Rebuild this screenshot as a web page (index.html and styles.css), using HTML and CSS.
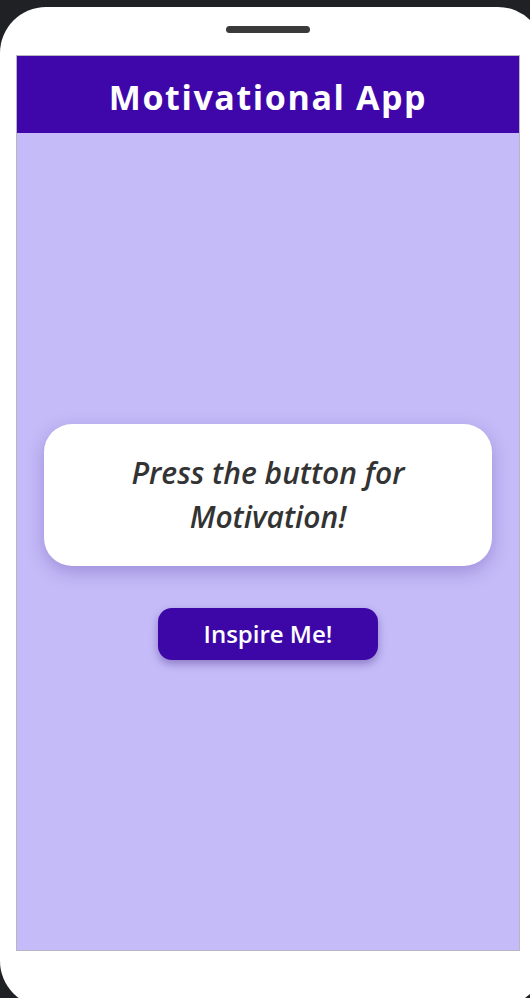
FILE: index.html
```html
<!DOCTYPE html>
<html lang="en">
<head>
<meta charset="utf-8">
<title>Motivational App</title>
<link rel="stylesheet" href="styles.css">
</head>
<body>
<div class="phone">
  <div class="notch"></div>
  <div class="screen">
    <header class="app-header">
      <h1 class="app-title">Motivational App</h1>
    </header>
    <main class="content">
      <div class="quote-card">
        <p class="quote-text">Press the button for Motivation!</p>
      </div>
      <button class="inspire-btn" type="button">Inspire Me!</button>
    </main>
  </div>
</div>
</body>
</html>
```
FILE: styles.css
```css
html, body {
  margin: 0;
  padding: 0;
  background: #202124;
  overflow: hidden;
}
body {
  font-family: "Open Sans", "Noto Sans", sans-serif;
}
.phone {
  position: relative;
  margin-top: 7px;
  width: 544px;
  height: 1000px;
  box-sizing: border-box;
  padding: 48px 24px 0 16px;
  background: #ffffff;
  border-radius: 46px;
}
.notch {
  position: absolute;
  top: 19px;
  left: 226px;
  width: 84px;
  height: 7px;
  border-radius: 4px;
  background: #3a3a3a;
}
.screen {
  width: 504px;
  height: 896px;
  box-sizing: border-box;
  border: 1px solid #b9b6c4;
  background: #c5bbf8;
  display: flex;
  flex-direction: column;
}
.app-header {
  height: 77px;
  flex: none;
  box-sizing: border-box;
  padding-top: 4px;
  background: #3f06aa;
  display: flex;
  align-items: center;
  justify-content: center;
}
.app-title {
  margin: 0;
  color: #ffffff;
  font-size: 34px;
  font-weight: 700;
  letter-spacing: 1.6px;
}
.content {
  flex: 1;
  display: flex;
  flex-direction: column;
  align-items: center;
  justify-content: center;
  gap: 42px;
}
.quote-card {
  width: 448px;
  height: 142px;
  box-sizing: border-box;
  background: #ffffff;
  border-radius: 28px;
  box-shadow: 0 6px 18px rgba(60, 30, 140, 0.28);
  display: flex;
  align-items: center;
  justify-content: center;
  padding: 0 30px;
}
.quote-text {
  margin: 0;
  text-align: center;
  font-style: italic;
  font-weight: 600;
  font-size: 30px;
  line-height: 44px;
  color: #333333;
}
.inspire-btn {
  width: 220px;
  height: 52px;
  border: none;
  border-radius: 14px;
  background: #3d07a8;
  color: #ffffff;
  font-family: "Open Sans", "Noto Sans", sans-serif;
  font-size: 24px;
  font-weight: 600;
  box-shadow: 0 4px 8px rgba(40, 10, 110, 0.35);
  cursor: pointer;
}
```
